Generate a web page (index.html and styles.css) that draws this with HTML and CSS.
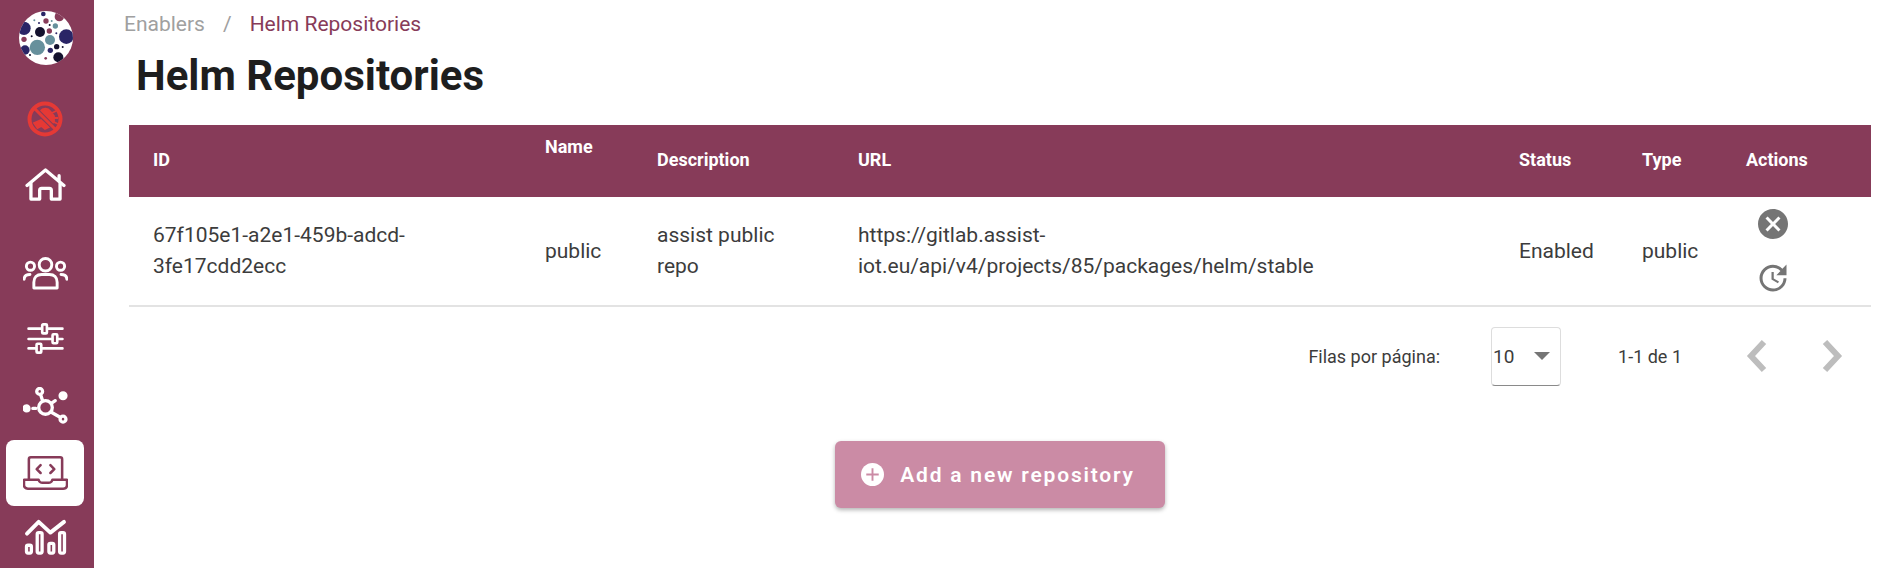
FILE: index.html
```html
<!DOCTYPE html>
<html lang="en">
<head>
  <meta charset="UTF-8">
  <title>Helm Repositories</title>
  <link rel="stylesheet" href="styles.css">
</head>
<body>
  <nav class="sidebar">
    <svg class="logo" viewBox="0 0 162 162">
      <defs><clipPath id="logoClip"><circle cx="81" cy="81" r="81"/></clipPath></defs>
      <circle cx="81" cy="81" r="81" fill="#fff"/>
      <g clip-path="url(#logoClip)">
        <circle cx="142" cy="77" r="22" fill="#2a2566"/>
        <circle cx="15" cy="52" r="20" fill="#2a2566"/>
        <circle cx="18" cy="117" r="14" fill="#2a2566"/>
        <circle cx="73" cy="9" r="7" fill="#2a2566"/>
        <circle cx="94" cy="118" r="8" fill="#2a2566"/>
        <circle cx="121" cy="17" r="14" fill="#873b59"/>
        <circle cx="91" cy="60" r="8" fill="#873b59"/>
        <circle cx="81" cy="30" r="8" fill="#873b59"/>
        <circle cx="15" cy="85" r="8" fill="#873b59"/>
        <circle cx="80" cy="142" r="4" fill="#873b59"/>
        <circle cx="63" cy="63" r="15" fill="#14122e"/>
        <circle cx="118" cy="139" r="15" fill="#14122e"/>
        <circle cx="113" cy="107" r="8" fill="#14122e"/>
        <circle cx="38" cy="76" r="3" fill="#14122e"/>
        <circle cx="131" cy="108" r="3" fill="#14122e"/>
        <circle cx="33" cy="132" r="3" fill="#14122e"/>
        <circle cx="92" cy="42" r="3" fill="#14122e"/>
        <circle cx="60" cy="36" r="3" fill="#2a2566"/>
        <circle cx="112" cy="67" r="3" fill="#2a2566"/>
        <circle cx="55" cy="109" r="23" fill="#66909c"/>
        <circle cx="93" cy="87" r="15" fill="#66909c"/>
        <circle cx="109" cy="45" r="8" fill="#66909c"/>
        <circle cx="46" cy="28" r="3" fill="#66909c"/>
        <circle cx="98" cy="30" r="3" fill="#66909c"/>
      </g>
    </svg>

    <div class="nav-item nav-bug">
      <svg width="36" height="36" viewBox="0 0 36 36" fill="none">
        <path d="M13 12a5.500 5 0 0 1 10-2l4 5v6l-3 2zM25 12l4-2M27 17h4M27 21l4 2M7 22l7-3 8 7-4 2-3.500-3-4 2z" fill="#e53935" stroke="#e53935" stroke-width="1.800"/>
        <path d="M7 7l22 22" stroke="#873b59" stroke-width="5"/>
        <path d="M7 7l22 22" stroke="#e53935" stroke-width="3"/>
        <circle cx="18" cy="18" r="15.500" stroke="#e53935" stroke-width="4"/>
      </svg>
    </div>

    <div class="nav-item">
      <svg width="41" height="33" viewBox="0 0 42 34" fill="none" stroke="#fff" stroke-width="3.400" stroke-linecap="round" stroke-linejoin="round">
        <path d="M2 18L21 2l19 16M35 8v6"/>
        <path d="M6 16v16h9V23a2 2 0 0 1 2-2h8a2 2 0 0 1 2 2v9h9V16"/>
      </svg>
    </div>

    <div class="nav-item nav-first">
      <svg width="45" height="33" viewBox="0 0 46 34" fill="none" stroke="#fff" stroke-width="3" stroke-linecap="round" stroke-linejoin="round">
        <circle cx="23" cy="8" r="6.500"/>
        <circle cx="7.500" cy="9.500" r="4.200"/>
        <circle cx="38.500" cy="9.500" r="4.200"/>
        <path d="M11 32v-6c0-5 3-8 8-8h8c5 0 8 3 8 8v6z"/>
        <path d="M1 23c0-3 2-5 6-5M45 23c0-3-2-5-6-5"/>
      </svg>
    </div>

    <div class="nav-item">
      <svg width="37" height="32" viewBox="0 0 38 34" fill="none" stroke="#fff" stroke-width="2.800" stroke-linecap="round" stroke-linejoin="round">
        <path d="M1 6h14M21 6h16M1 17h25M32 17h5M1 27h8M15 27h22"/>
        <rect x="15.500" y="1.500" width="5" height="9.500" rx="1"/>
        <rect x="26.500" y="12" width="5" height="9.500" rx="1"/>
        <rect x="9.500" y="22" width="5" height="9.500" rx="1"/>
      </svg>
    </div>

    <div class="nav-item">
      <svg width="45" height="37" viewBox="0 0 46 38" fill="none" stroke="#fff" stroke-width="3.400" stroke-linecap="round">
        <circle cx="23" cy="21" r="7"/>
        <circle cx="17" cy="4.500" r="3"/>
        <circle cx="41" cy="33" r="3"/>
        <circle cx="3.500" cy="22" r="2.500" fill="#fff"/>
        <circle cx="41" cy="9" r="3" fill="#fff"/>
        <path d="M18 8l2 6M10 22h3M30 16l3-2M29 26l9 5"/>
      </svg>
    </div>

    <div class="nav-item active">
      <svg width="45" height="34" viewBox="0 0 46 34" fill="none" stroke="#873b59" stroke-width="2.600" stroke-linecap="round" stroke-linejoin="round">
        <path d="M6 24V3a2 2 0 0 1 2-2h30a2 2 0 0 1 2 2v21"/>
        <path d="M1 24h15c1 3 2 3 4 3h6c2 0 3 0 4-3h15v5c0 2-1 4-4 4H5c-3 0-4-2-4-4z"/>
        <path d="M18 9l-4 4 4 4M28 9l4 4-4 4"/>
      </svg>
    </div>

    <div class="nav-item nav-chart">
      <svg width="43" height="37" viewBox="0 0 44 38" fill="none" stroke="#fff" stroke-width="3.400" stroke-linecap="round" stroke-linejoin="round">
        <path d="M3 16L15 4l12 11L41 4" stroke-width="4"/>
        <rect x="2.500" y="28" width="5" height="8" rx="1.500"/>
        <rect x="13.500" y="15" width="5" height="21" rx="1.500"/>
        <rect x="25.500" y="26" width="5" height="10" rx="1.500"/>
        <rect x="36.500" y="15" width="5" height="21" rx="1.500"/>
      </svg>
    </div>
  </nav>

  <main class="content">
    <div class="breadcrumb">
      <span class="crumb">Enablers</span>
      <span class="crumb-sep">/</span>
      <span class="crumb-current">Helm Repositories</span>
    </div>

    <h1 class="page-title">Helm Repositories</h1>

    <table class="repo-table">
      <colgroup>
        <col class="col-id"><col class="col-name"><col class="col-desc"><col class="col-url">
        <col class="col-status"><col class="col-type"><col class="col-actions">
      </colgroup>
      <thead>
        <tr>
          <th>ID</th>
          <th class="th-raised">Name</th>
          <th>Description</th>
          <th>URL</th>
          <th>Status</th>
          <th>Type</th>
          <th>Actions</th>
        </tr>
      </thead>
      <tbody>
        <tr>
          <td>67f105e1-a2e1-459b-adcd-3fe17cdd2ecc</td>
          <td>public</td>
          <td>assist public repo</td>
          <td>https://gitlab.assist-iot.eu/api/v4/projects/85/packages/helm/stable</td>
          <td>Enabled</td>
          <td>public</td>
          <td>
            <div class="row-actions">
              <svg class="action-icon" viewBox="0 0 24 24"><path d="M12 2C6.470 2 2 6.470 2 12s4.470 10 10 10 10-4.470 10-10S17.530 2 12 2zm5 13.590L15.590 17 12 13.410 8.410 17 7 15.590 10.590 12 7 8.410 8.410 7 12 10.590 15.590 7 17 8.410 13.410 12 17 15.590z"/></svg>
              <svg class="action-icon" viewBox="0 0 24 24"><path d="M21 10.120h-6.780l2.740-2.820c-2.730-2.700-7.150-2.800-9.880-.1-2.730 2.710-2.730 7.080 0 9.790s7.150 2.710 9.880 0C18.320 15.650 19 14.080 19 12.100h2c0 1.980-.88 4.550-2.640 6.290-3.510 3.480-9.210 3.480-12.720 0-3.500-3.470-3.530-9.110-.02-12.580s9.140-3.470 12.650 0L21 3v7.120zM12.500 8v4.250l3.500 2.080-.72 1.210L11 13V8h1.500z"/></svg>
            </div>
          </td>
        </tr>
      </tbody>
    </table>

    <div class="pagination">
      <span class="rows-label">Filas por página:</span>
      <div class="rows-select">
        <span>10</span>
        <span class="select-arrow"></span>
      </div>
      <span class="page-range">1-1 de 1</span>
      <svg class="page-arrow" viewBox="0 0 24 36" fill="none"><path d="M19 4L6 18l13 14" stroke="#bdbdbd" stroke-width="6"/></svg>
      <svg class="page-arrow" viewBox="0 0 24 36" fill="none"><path d="M5 4l13 14L5 32" stroke="#bdbdbd" stroke-width="6"/></svg>
    </div>

    <div class="add-row">
      <button class="add-btn" type="button">
        <svg class="add-icon" viewBox="0 0 24 24"><circle cx="12" cy="12" r="12" fill="#fff"/><path d="M12 5.500v13M5.500 12h13" stroke="#cb8ba5" stroke-width="2"/></svg>
        Add a new repository
      </button>
    </div>
  </main>
</body>
</html>
```

FILE: styles.css
```css
html, body {
  height: 100%;
  overflow: hidden;
}
body {
  margin: 0;
  display: flex;
  font-family: Roboto, sans-serif;
  background: #fff;
  color: #333;
}

/* sidebar */
.sidebar {
  width: 94px;
  height: 568px;
  flex-shrink: 0;
  background: #873b59;
  display: flex;
  flex-direction: column;
  align-items: flex-start;
  padding-top: 11px;
  box-sizing: border-box;
  overflow: hidden;
}
.logo {
  width: 54px;
  height: 54px;
  margin: 0 0 20px 19px;
  flex-shrink: 0;
}
.nav-item {
  width: 78px;
  height: 66px;
  margin-left: 6px;
  flex-shrink: 0;
  display: flex;
  align-items: center;
  justify-content: center;
  border-radius: 8px;
}
.nav-bug {
  padding-top: 1px;
  box-sizing: border-box;
}
.nav-first {
  margin-top: 23px;
}
.nav-item.active {
  background: #fff;
  margin-top: 2px;
}
.nav-chart {
  margin-top: -3px;
}

/* main area */
.content {
  flex: 1;
  min-width: 0;
  padding: 0 17px 0 35px;
}
.breadcrumb {
  display: flex;
  height: 48px;
  align-items: center;
  margin-left: -5px;
  font-size: 21px;
}
.crumb {
  color: #a0a0a0;
}
.crumb-sep {
  color: #a0a0a0;
  margin: 0 18px;
}
.crumb-current {
  color: #873b59;
}
.page-title {
  margin: 0;
  padding-left: 7px;
  height: 77px;
  font-size: 42px;
  line-height: 56px;
  font-weight: 700;
  color: #1e1e1e;
}

/* table */
.repo-table {
  width: 1742px;
  border-collapse: collapse;
  table-layout: fixed;
}
.col-id { width: 392px; }
.col-name { width: 112px; }
.col-desc { width: 201px; }
.col-url { width: 661px; }
.col-status { width: 123px; }
.col-type { width: 104px; }
.col-actions { width: 149px; }
.repo-table th {
  height: 72px;
  padding: 0 24px 3px;
  box-sizing: border-box;
  background: #873b59;
  color: #fff;
  font-size: 18px;
  font-weight: 700;
  text-align: left;
}
.repo-table th.th-raised {
  padding-bottom: 30px;
}
.repo-table td {
  height: 109px;
  padding: 0 24px;
  border-bottom: 2px solid #e3e3e3;
  font-size: 21px;
  line-height: 31px;
  color: #3c3c3c;
  box-sizing: border-box;
}
.row-actions {
  display: flex;
  flex-direction: column;
  align-items: flex-start;
  gap: 18px;
  margin-left: 9px;
  width: 36px;
}
.action-icon {
  width: 36px;
  height: 36px;
  fill: #757575;
}

/* pagination */
.pagination {
  display: flex;
  align-items: center;
  justify-content: flex-end;
  height: 98px;
  width: 1742px;
  font-size: 18px;
  color: #3c3c3c;
}
.rows-label {
  margin-right: 51px;
}
.rows-select {
  width: 70px;
  height: 59px;
  box-sizing: border-box;
  border: 1px solid #ddd;
  border-bottom-color: #8a8a8a;
  border-radius: 4px;
  padding-left: 1px;
  display: flex;
  align-items: center;
  margin-right: 57px;
  font-size: 19px;
}
.select-arrow {
  margin-left: 20px;
  border-left: 8px solid transparent;
  border-right: 8px solid transparent;
  border-top: 8px solid #757575;
}
.page-arrow {
  width: 24px;
  height: 36px;
}
.page-range {
  margin-right: 63px;
}
.page-arrow + .page-arrow {
  margin-left: 51px;
  margin-right: 27px;
}

/* add button */
.add-row {
  display: flex;
  width: 1742px;
  justify-content: center;
  margin-top: 36px;
}
.add-btn {
  width: 330px;
  height: 67px;
  padding: 0 4px 0 0;
  border: none;
  border-radius: 6px;
  background: #cb8ba5;
  color: #fff;
  font-family: Roboto, sans-serif;
  font-size: 21px;
  font-weight: 600;
  letter-spacing: 1.800px;
  display: flex;
  align-items: center;
  justify-content: center;
  gap: 16px;
  box-shadow: 0 2px 4px rgba(0, 0, 0, 0.3);
}
.add-icon {
  width: 23px;
  height: 23px;
}
```
